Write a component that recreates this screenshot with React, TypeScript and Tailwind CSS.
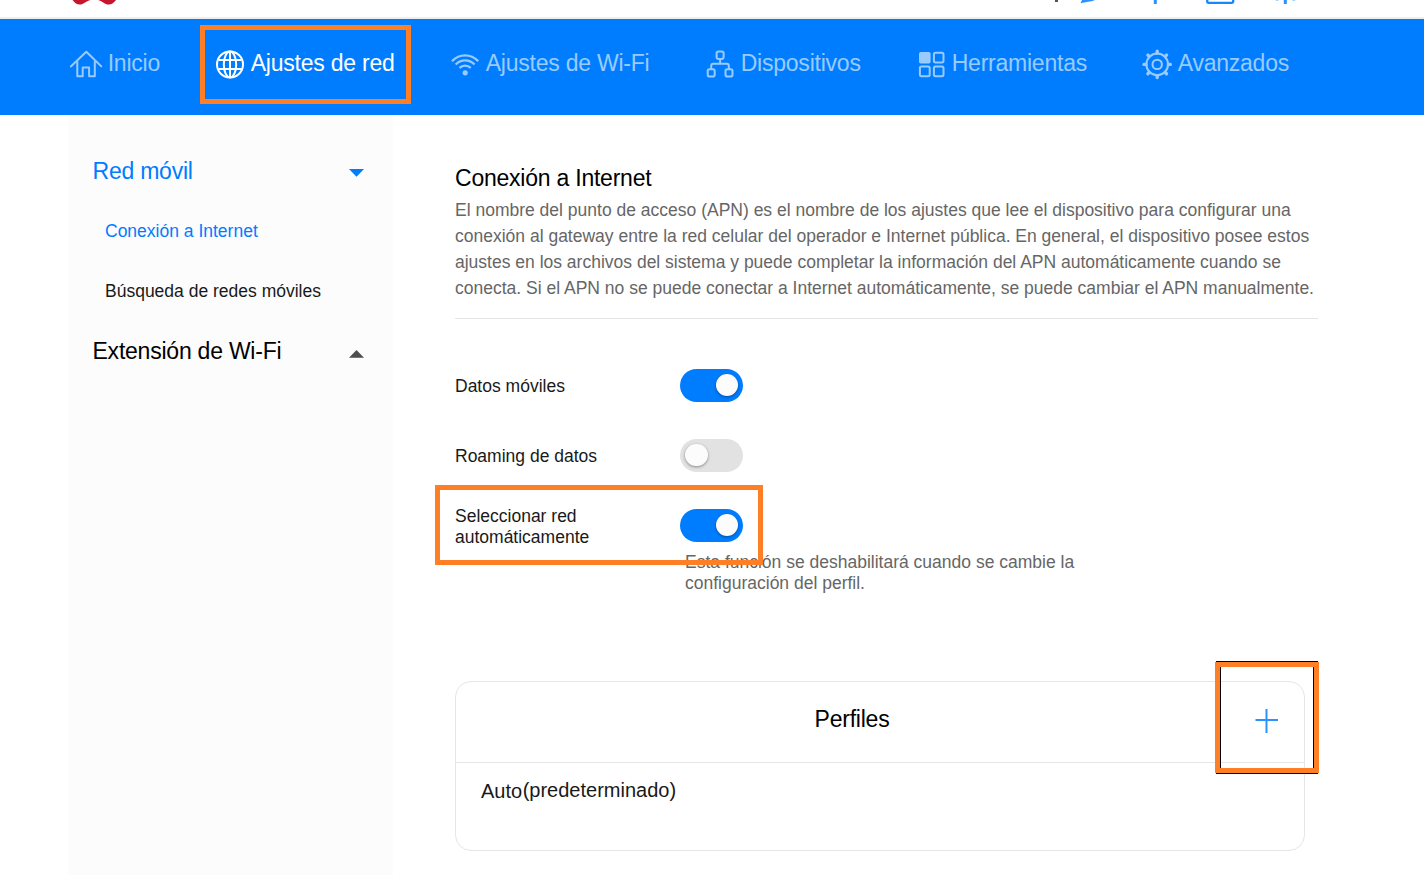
import type { ReactNode } from "react";

const stroke = { fill: "none", stroke: "currentColor" } as const;

function HomeIcon() {
  return (
    <svg className="-ml-[3px] block shrink-0" width="34" height="30" viewBox="0 0 34 30" {...stroke} strokeWidth="2" strokeLinejoin="round" strokeLinecap="round">
      <path d="M1.8 17.4 17.300 2.8 32.300 17.400" />
      <path d="M8.3 12.5V27.2h5.4v-8.7h6.400v8.700h5.700V12.5" />
    </svg>
  );
}

function GlobeIcon() {
  return (
    <svg className="block shrink-0" width="30" height="30" viewBox="0 0 30 30" {...stroke} strokeWidth="2">
      <circle cx="15" cy="15.5" r="13" />
      <ellipse cx="15" cy="15.5" rx="6.2" ry="13" />
      <path d="M15 2.5v26M3.5 11h23M3.5 20h23" />
    </svg>
  );
}

function WifiIcon() {
  return (
    <svg className="block shrink-0" width="30" height="30" viewBox="0 0 30 30" {...stroke} strokeWidth="2.3">
      <path d="M2 12.1C9.6 4.4 20.6 4.4 28.2 12.1" />
      <path d="M5.7 15.5C11.1 10.1 19.1 10.1 24.5 15.5" />
      <path d="M9.5 18.9C12.7 15.9 17.5 15.9 20.7 18.9" />
      <circle cx="15.2" cy="23.8" r="2.6" fill="currentColor" stroke="none" />
    </svg>
  );
}

function DevicesIcon() {
  return (
    <svg className="block shrink-0" width="30" height="30" viewBox="0 0 30 30" {...stroke} strokeWidth="2">
      <rect x="11.6" y="2.5" width="7" height="7.4" rx="1.8" />
      <rect x="2.7" y="20.2" width="7" height="7.4" rx="1.8" />
      <rect x="20.5" y="20.2" width="7" height="7.4" rx="1.8" />
      <path d="M15.1 10v4.8M6.2 20v-3.200q0-2 2-2h13.6q2 0 2 2v3.200" />
    </svg>
  );
}

function ToolsIcon() {
  return (
    <svg className="block shrink-0" width="30" height="30" viewBox="0 0 30 30" {...stroke} strokeWidth="2">
      <rect x="3" y="3" width="11.6" height="11.6" rx="1.8" fill="currentColor" stroke="none" />
      <rect x="17.9" y="3.8" width="9.6" height="9.6" rx="1.6" />
      <rect x="3.9" y="17.6" width="9.8" height="9.6" rx="1.6" />
      <rect x="17.9" y="17.6" width="9.6" height="9.6" rx="1.6" />
    </svg>
  );
}

function GearIcon() {
  return (
    <svg className="block shrink-0" width="31" height="31" viewBox="0 0 31 31" {...stroke} strokeWidth="2">
      <circle cx="15.2" cy="15.4" r="10.8" />
      <circle cx="15.2" cy="15.4" r="4.7" />
      <path
        d="M15.2 2.200v2M15.200 26.600v2M2 15.400h2M26.400 15.400h2M5.900 6.100l1.300 1.300M23.200 23.400l1.300 1.300M5.900 24.700l1.300-1.300M23.200 7.400l1.300-1.300"
        strokeWidth="3.4"
        strokeLinecap="round"
      />
    </svg>
  );
}

function NavItem({ icon, label, className }: { icon: ReactNode; label: string; className: string }) {
  return (
    <a className={`flex shrink-0 items-start whitespace-nowrap ${className}`}>
      <span className="mt-[30px] w-9 shrink-0">{icon}</span>
      <span className="mt-[31px] -ml-[0.3px] leading-[26px]">{label}</span>
    </a>
  );
}

function Toggle({ on }: { on: boolean }) {
  return (
    <span className={`-mt-0.5 flex h-[33px] w-[63px] shrink-0 items-center rounded-full px-[5px] ${on ? "justify-end bg-[#007dff]" : "justify-start bg-[#e2e2e2]"}`}>
      <span className="size-[22.5px] rounded-full bg-[#fcfcfc] shadow-[0_1px_3px_rgba(0,0,0,0.4)]" />
    </span>
  );
}

function SettingRow({ label, on, className = "" }: { label: string; on: boolean; className?: string }) {
  return (
    <div className="flex h-[70px] items-center">
      <span className={`w-[225px] pr-16 leading-[21px] ${className}`}>{label}</span>
      <Toggle on={on} />
    </div>
  );
}

export default function App() {
  return (
    <div className="relative flex h-[875px] w-[1424px] flex-col overflow-hidden bg-white font-['Liberation_Sans',Arial,sans-serif] text-[17.5px] text-[#191919]">
      <header className="h-[19px] shrink-0 border-b-2 border-[#eeeeee] px-[68px]">
        <div className="flex justify-between">
          <svg className="block" width="52" height="8" viewBox="68 0 52 8" fill="#c7152e">
            <path d="M72.5 0C75 3 77 4.7 80 4.6 83 4.4 86 1.5 90.5 0Z" />
            <path d="M98 0C102.500 1.500 105 4.400 108.500 4.600 111.500 4.700 113.500 3 116 0Z" />
          </svg>
          <svg className="mr-14 block" width="250" height="8" viewBox="1050 0 250 8">
            <rect x="1055" y="0" width="3" height="2" fill="#555555" />
            <path d="M1082 0h13q-3 1.600-7 1.800l-7.500 1.500Z" fill="#2a91ff" />
            <path d="M1155.300 0v4M1285.300 0v4" fill="none" stroke="#2a91ff" strokeWidth="3" />
            <path d="M1207.200 0v1.200q0 1.600 1.600 1.600h22.800q1.600 0 1.600-1.600V0" fill="none" stroke="#1688ff" strokeWidth="2.300" />
            <path d="M1275.500 0l4 0-3 1ZM1291 0l4.500 0-1 1Z" fill="#8cc5ff" />
          </svg>
        </div>
      </header>

      <nav className="flex h-24 shrink-0 bg-[#007dff] pl-[72px] text-[23px] tracking-[-0.23px] text-[#99cbff]">
        <NavItem className="w-[143px]" icon={<HomeIcon />} label="Inicio" />
        <NavItem className="w-[235px] text-white" icon={<GlobeIcon />} label="Ajustes de red" />
        <NavItem className="w-[255px]" icon={<WifiIcon />} label="Ajustes de Wi-Fi" />
        <NavItem className="w-[211px]" icon={<DevicesIcon />} label="Dispositivos" />
        <NavItem className="w-[226px]" icon={<ToolsIcon />} label="Herramientas" />
        <NavItem className="w-[200px]" icon={<GearIcon />} label="Avanzados" />
      </nav>

      <div className="flex min-h-0 flex-1 pl-[68px]">
        <aside className="w-[325px] shrink-0 bg-[#fcfcfc] pt-[25px]">
          <div className="flex h-[60px] items-center justify-between pr-[29px] pl-[24.5px] text-[23px] tracking-[-0.23px] text-[#007dff]">
            <span className="pt-px leading-[26px]">Red móvil</span>
            <svg className="mt-1.5 block" width="15" height="8" viewBox="0 0 15 8" fill="currentColor">
              <path d="M0 0h15L7.500 7.700Z" />
            </svg>
          </div>
          <div className="flex h-[60px] items-center pt-0.5 pl-[37px] text-[#007dff]">Conexión a Internet</div>
          <div className="flex h-[60px] items-center pt-0.5 pl-[37px]">Búsqueda de redes móviles</div>
          <div className="flex h-[60px] items-center justify-between pr-[29px] pl-[24.5px] text-[23px] tracking-[-0.23px] text-black">
            <span className="pt-px leading-[26px]">Extensión de Wi-Fi</span>
            <svg className="mt-2 block" width="15" height="8" viewBox="0 0 15 8" fill="#4d4d4d">
              <path d="M0 7.700h15L7.500 0Z" />
            </svg>
          </div>
        </aside>

        <main className="ml-[62px] w-[863px] pt-[50px]">
          <h1 className="text-[23px] leading-[26px] tracking-[-0.23px] text-black">Conexión a Internet</h1>
          <div className="mt-[6px] border-b border-[#e5e5e5] pb-[17px] leading-[26px] whitespace-nowrap text-[#666666]">
            <p>El nombre del punto de acceso (APN) es el nombre de los ajustes que lee el dispositivo para configurar una</p>
            <p>conexión al gateway entre la red celular del operador e Internet pública. En general, el dispositivo posee estos</p>
            <p>ajustes en los archivos del sistema y puede completar la información del APN automáticamente cuando se</p>
            <p>conecta. Si el APN no se puede conectar a Internet automáticamente, se puede cambiar el APN manualmente.</p>
          </div>

          <section className="mt-8">
            <SettingRow label="Datos móviles" on />
            <SettingRow label="Roaming de datos" on={false} />
            <SettingRow label="Seleccionar red automáticamente" on className="pt-0.5" />
            <p className="-mt-[9px] ml-[230px] w-[400px] leading-[21px] text-[#666666]">
              Esta función se deshabilitará cuando se cambie la configuración del perfil.
            </p>
          </section>

          <section className="mt-[87px] h-[170px] w-[850px] rounded-[16px] border border-[#e6e6e6]">
            <div className="flex h-[81px] items-center border-b border-[#e6e6e6]">
              <h2 className="flex-1 pr-[7px] pb-[7px] text-center text-[23px] leading-[26px] tracking-[-0.23px] text-black">Perfiles</h2>
              <svg className="mr-[25px] block" width="24" height="26" viewBox="0 0 24 26" fill="none" stroke="#2b91ff" strokeWidth="2">
                <path d="M0.500 11h22.500M11.500 -1v25" />
              </svg>
            </div>
            <p className="mt-[16px] ml-[25px] text-[20px] leading-6">
              Auto<span className="relative -top-px ml-[0.5px]">(predeterminado)</span>
            </p>
          </section>
        </main>
      </div>

      <div className="pointer-events-none absolute top-[25px] left-[200px] h-[79px] w-[211px] border-[5px] border-[#ff7f27]" />
      <div className="pointer-events-none absolute top-[485px] left-[435px] h-[80px] w-[328px] border-[5px] border-[#ff7f27]" />
      <div className="pointer-events-none absolute top-[661px] left-[1216px] h-[113px] w-[102px] border-y border-black" />
      <div className="pointer-events-none absolute top-[662px] left-[1215px] h-[111px] w-[104px] border-[5px] border-[#ff7f27]">
        <div className="h-full border-x border-black" />
      </div>
    </div>
  );
}
